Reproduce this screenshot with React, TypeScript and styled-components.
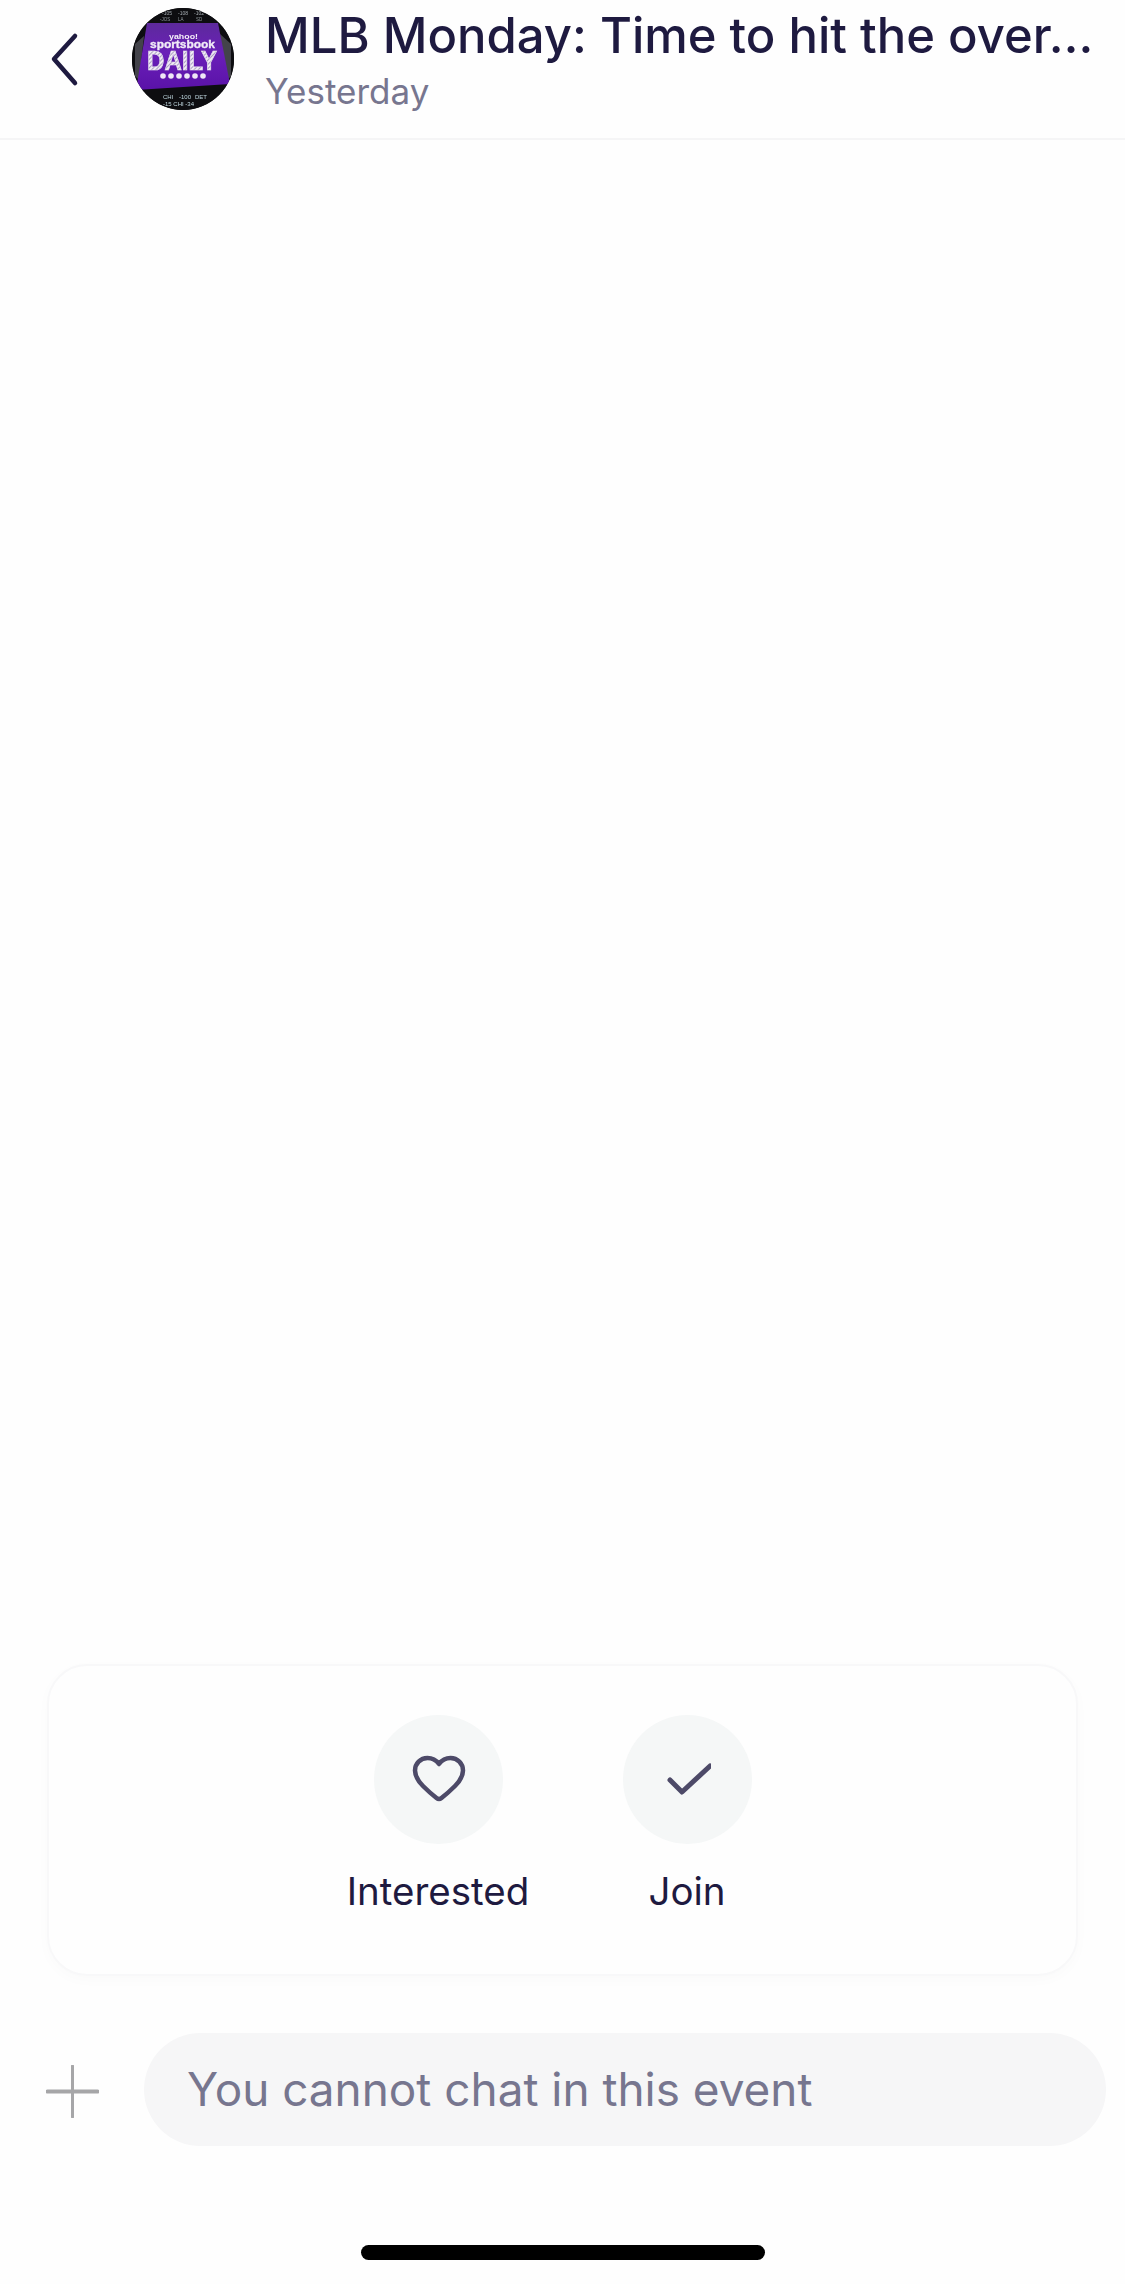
import React from 'react';
import styled, { createGlobalStyle } from 'styled-components';

const GlobalStyle = createGlobalStyle`
  html, body {
    margin: 0;
    padding: 0;
    background: #fefefe;
  }
  * {
    box-sizing: border-box;
  }
`;

const Page = styled.div`
  width: 1125px;
  height: 2284px;
  display: flex;
  flex-direction: column;
  background: #fefefe;
  font-family: Inter, "Liberation Sans", sans-serif;
  overflow: hidden;
`;

const Header = styled.header`
  height: 140px;
  flex-shrink: 0;
  display: flex;
  align-items: flex-start;
  border-bottom: 2px solid #f5f5f6;
  padding: 8px 0 0 50px;
`;

const BackButton = styled.button`
  width: 30px;
  height: 56px;
  margin-top: 24px;
  padding: 0;
  border: none;
  background: none;
  display: flex;
`;

const Avatar = styled.div`
  width: 102px;
  height: 102px;
  margin-left: 52px;
  flex-shrink: 0;
  border-radius: 50%;
  overflow: hidden;
  background: #0c0c0e;
`;

const HeaderText = styled.div`
  margin-left: 31px;
  width: 826px;
  display: flex;
  flex-direction: column;
`;

const Title = styled.h1`
  margin: 0;
  font-size: 49px;
  line-height: 56px;
  font-weight: 450;
  color: #1e1a40;
  white-space: nowrap;
`;

const Subtitle = styled.span`
  margin-top: 6px;
  font-size: 35px;
  line-height: 42px;
  color: #77768f;
`;

const Main = styled.main`
  flex: 1;
`;

const ActionCard = styled.section`
  margin: 0 47px;
  height: 312px;
  padding-top: 49px;
  display: flex;
  justify-content: center;
  gap: 69px;
  background: #fefefe;
  border: 2px solid #f8f8f9;
  border-radius: 40px;
  box-shadow: 0 4px 14px rgba(30, 26, 64, 0.02);
`;

const Action = styled.div`
  width: 180px;
  display: flex;
  flex-direction: column;
  align-items: center;
`;

const ActionCircle = styled.div`
  width: 129px;
  height: 129px;
  border-radius: 50%;
  background: #f5f7f7;
  display: flex;
  align-items: center;
  justify-content: center;
`;

const ActionLabel = styled.span`
  margin-top: 24px;
  font-size: 38.5px;
  line-height: 46px;
  color: #1e1a40;
  white-space: nowrap;
`;

const Composer = styled.div`
  margin-top: 57px;
  padding: 0 19px 0 46px;
  display: flex;
  align-items: center;
`;

const AddButton = styled.button`
  width: 53px;
  height: 53px;
  margin-top: 4px;
  padding: 0;
  border: none;
  background: none;
  display: flex;
`;

const ChatField = styled.div`
  margin-left: 45px;
  flex: 1;
  height: 113px;
  padding-left: 43px;
  display: flex;
  align-items: center;
  border-radius: 57px;
  background: #f6f6f7;
  font-size: 45.9px;
  color: #77768f;
`;

const HomeArea = styled.div`
  height: 138px;
  flex-shrink: 0;
  padding-top: 99px;
  display: flex;
  justify-content: center;
`;

const HomeBar = styled.div`
  width: 404px;
  height: 15px;
  border-radius: 8px;
  background: #000;
`;

const TICKER_TOP = ['-105', '-108', '-102'];
const TICKER_MID = ['-JOS', 'LA', 'SD'];
const TICKER_BOTTOM = ['CHI', '-100', 'DET'];
const CHIPS = [31, 39, 47, 55, 63, 71];

const SportsbookLogo: React.FC = () => (
  <svg width="102" height="102" viewBox="0 0 102 102" style={{ display: 'block', filter: 'blur(0.4px)' }}>
    <defs>
      <linearGradient id="screen" x1="0" y1="0" x2="0" y2="1">
        <stop offset="0" stopColor="#5d2a9c" />
        <stop offset="0.45" stopColor="#6a1fb8" />
        <stop offset="1" stopColor="#5a12a8" />
      </linearGradient>
      <pattern id="stripes" width="3" height="3" patternUnits="userSpaceOnUse" patternTransform="rotate(45)">
        <rect width="3" height="3" fill="#f1edf5" />
        <rect width="1" height="3" fill="#a99cc0" />
      </pattern>
    </defs>
    <rect width="102" height="102" fill="#0d0d10" />
    {TICKER_TOP.map((t, i) => (
      <text key={t} x={30 + i * 16} y={7} fontSize="5" fill="#a4abb0" fontFamily="Liberation Sans">
        {t}
      </text>
    ))}
    {TICKER_MID.map((t, i) => (
      <text key={t} x={28 + i * 18} y={12.5} fontSize="4.5" fill="#8f979c" fontFamily="Liberation Sans">
        {t}
      </text>
    ))}
    {TICKER_BOTTOM.map((t, i) => (
      <text key={t} x={31 + i * 16} y={91} fontSize="6" fill="#c0d8e0" fontFamily="Liberation Sans">
        {t}
      </text>
    ))}
    <text x={31} y={98} fontSize="6" fill="#c0d8e0" fontFamily="Liberation Sans">
      -15 CHI -34
    </text>
    <path d="M3 36 L12 28 L7 72 L3 68Z" fill="#56565e" opacity="0.75" />
    <path d="M88 26 L99 36 L99 68 L94 74Z" fill="#56565e" opacity="0.75" />
    <path d="M15 15 H86 L98 76 L4 82Z" fill="url(#screen)" />
    <text
      x="37"
      y="31"
      textLength="29"
      lengthAdjust="spacingAndGlyphs"
      fontSize="8"
      fontWeight="700"
      fill="#f6f1fa"
      fontFamily="Liberation Sans"
    >
      yahoo!
    </text>
    <text
      x="18"
      y="40"
      textLength="65"
      lengthAdjust="spacingAndGlyphs"
      fontSize="11"
      fontWeight="700"
      fill="#f1ebf7"
      stroke="#f1ebf7"
      strokeWidth="0.35"
      fontFamily="Liberation Sans"
    >
      sportsbook
    </text>
    <text
      x="15"
      y="62"
      textLength="70"
      lengthAdjust="spacingAndGlyphs"
      fontSize="27"
      fontWeight="700"
      fill="url(#stripes)"
      stroke="#e4deec"
      strokeWidth="0.7"
      fontFamily="Liberation Sans"
    >
      DAILY
    </text>
    {CHIPS.map(x => (
      <circle key={x} cx={x} cy={68} r={2.8} fill="#efe7f6" />
    ))}
  </svg>
);

const App: React.FC = () => (
  <Page>
    <GlobalStyle />
    <Header>
      <BackButton aria-label="Back">
        <svg width="30" height="56" viewBox="0 0 30 56" fill="none">
          <path d="M25 4 L4 27 L25 51" stroke="#1e1a40" strokeWidth="4.5" strokeLinecap="round" strokeLinejoin="round" />
        </svg>
      </BackButton>
      <Avatar>
        <SportsbookLogo />
      </Avatar>
      <HeaderText>
        <Title>MLB Monday: Time to hit the over…</Title>
        <Subtitle>Yesterday</Subtitle>
      </HeaderText>
    </Header>
    <Main />
    <ActionCard>
      <Action>
        <ActionCircle>
          <svg width="56" height="50" viewBox="-1 0 56 50" fill="none">
            <path
              d="M28 9 C25 5 21 3 16.5 3 C9.5 3 4 8.5 4 15.5 C4 21 7 26 12 31 C16.5 35.5 21 39.5 25.5 43 C27 44.2 29 44.2 30.5 43 C35 39.5 39.5 35.5 44 31 C49 26 52 21 52 15.5 C52 8.5 46.5 3 39.5 3 C35 3 31 5 28 9Z"
              stroke="#4d4a68"
              strokeWidth="4.5"
              strokeLinejoin="round"
            />
          </svg>
        </ActionCircle>
        <ActionLabel>Interested</ActionLabel>
      </Action>
      <Action>
        <ActionCircle>
          <svg width="48" height="36" viewBox="-1 0 48 36" fill="none">
            <path d="M6 18 L18 30 L46 4" stroke="#4d4a68" strokeWidth="5" strokeLinecap="round" strokeLinejoin="round" />
          </svg>
        </ActionCircle>
        <ActionLabel>Join</ActionLabel>
      </Action>
    </ActionCard>
    <Composer>
      <AddButton aria-label="Add">
        <svg width="53" height="53" viewBox="0 0 53 53" fill="none">
          <path d="M26.5 1 V52" stroke="#a6a6a8" strokeWidth="3" strokeLinecap="round" />
          <path d="M1.5 26.5 H51.5" stroke="#a6a6a8" strokeWidth="4" strokeLinecap="round" />
        </svg>
      </AddButton>
      <ChatField>You cannot chat in this event</ChatField>
    </Composer>
    <HomeArea>
      <HomeBar />
    </HomeArea>
  </Page>
);

export default App;
